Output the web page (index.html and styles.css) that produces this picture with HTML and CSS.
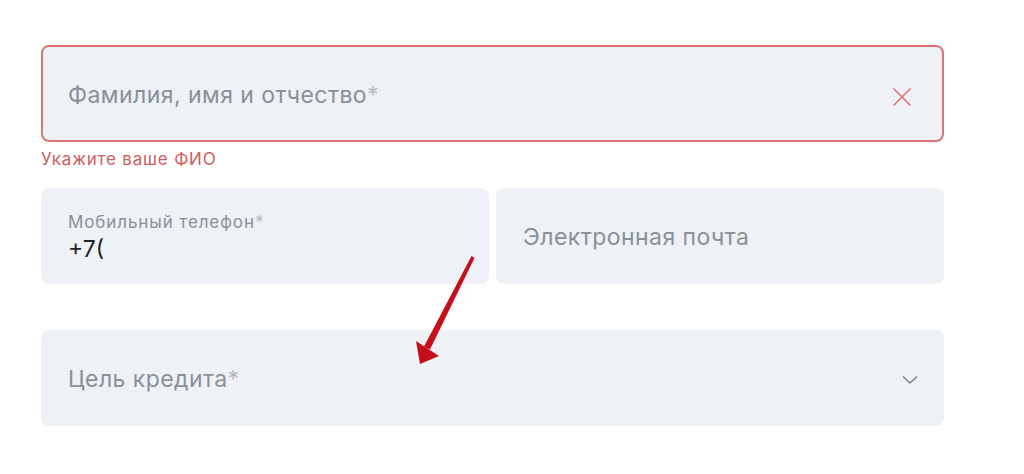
FILE: index.html
```html
<!DOCTYPE html>
<html>
    <head>
    <title>Заявка на кредит</title>
    <meta charset="UTF-8">
    <meta name="viewport" content="width=device-width, initial-scale=1.0">
    <link rel="stylesheet" href="styles.css">
    </head>

    <body>
        <div class="forma">
            <div class="pole pole-oshibka">
                <span class="podskazka">Фамилия, имя и отчество<span class="zvezda">*</span></span>
                <svg class="krestik" width="20" height="20" viewBox="0 0 20 20">
                    <path d="M1.5 1.5 L18.5 18.5 M18.5 1.5 L1.5 18.5" stroke="#d87070" stroke-width="1.5" fill="none"/>
                </svg>
            </div>
            <div class="oshibka">Укажите ваше ФИО</div>

            <div class="ryad">
                <div class="pole pole-zapolneno">
                    <span class="metka">Мобильный телефон<span class="zvezda">*</span></span>
                    <span class="znachenie">+7(</span>
                </div>
                <div class="pole">
                    <span class="podskazka">Электронная почта</span>
                </div>
            </div>

            <div class="pole pole-spisok">
                <span class="podskazka">Цель кредита<span class="zvezda">*</span></span>
                <svg class="strelka-vniz" width="16" height="10" viewBox="0 0 16 10">
                    <path d="M1 1.5 L8 8 L15 1.5" stroke="#7d848c" stroke-width="1.6" fill="none"/>
                </svg>
            </div>
        </div>

        <!-- красная стрелка-пометка поверх формы -->
        <svg class="ukazatel" width="75" height="120" viewBox="0 0 75 120">
            <path d="M61.5 6 L64.5 8 L20 99.5 L14 96.5 Z" fill="#c5101a"/>
            <path d="M10 114 L6 91 L29 106 Z" fill="#c5101a"/>
        </svg>
    </body>
</html>
```
FILE: styles.css
```css
body{
    margin: 0;
    background-color: #ffffff;
    font-family: Inter, "Liberation Sans", Arial, sans-serif;
}

.forma{
    width: 903px;
    padding: 45px 0 0 41px;
}

.pole{
    display: flex;
    align-items: center;
    justify-content: space-between;
    box-sizing: border-box;
    height: 96px;
    padding: 2px 26px 0 27px;
    background-color: #eef1f6;
    border-radius: 8px;
    flex: 1;
}

.pole-oshibka{
    height: 97px;
    border: 2px solid #d97575;
    padding: 2px 30px 0 25px;
}

.podskazka{
    font-size: 23px;
    letter-spacing: 0.45px;
    color: #8a9098;
}

.zvezda{
    color: #b4b9c0;
}

.krestik{
    margin-top: 4px;
}

.oshibka{
    margin: 7px 0 0 0;
    font-size: 17px;
    letter-spacing: 0.8px;
    line-height: 21px;
    color: #d05d5b;
    height: 39px;
}

.ryad{
    display: flex;
    gap: 7px;
}

.pole-zapolneno{
    flex-direction: column;
    align-items: flex-start;
    justify-content: center;
}

.metka{
    font-size: 17px;
    letter-spacing: 0.9px;
    color: #8a9098;
    margin-bottom: 3px;
}

.znachenie{
    font-size: 23px;
    color: #1f2226;
}

.pole-spisok{
    margin-top: 46px;
    padding-right: 26px;
}

.strelka-vniz{
    margin-top: 2px;
}

.ukazatel{
    position: absolute;
    left: 410px;
    top: 250px;
}
```
